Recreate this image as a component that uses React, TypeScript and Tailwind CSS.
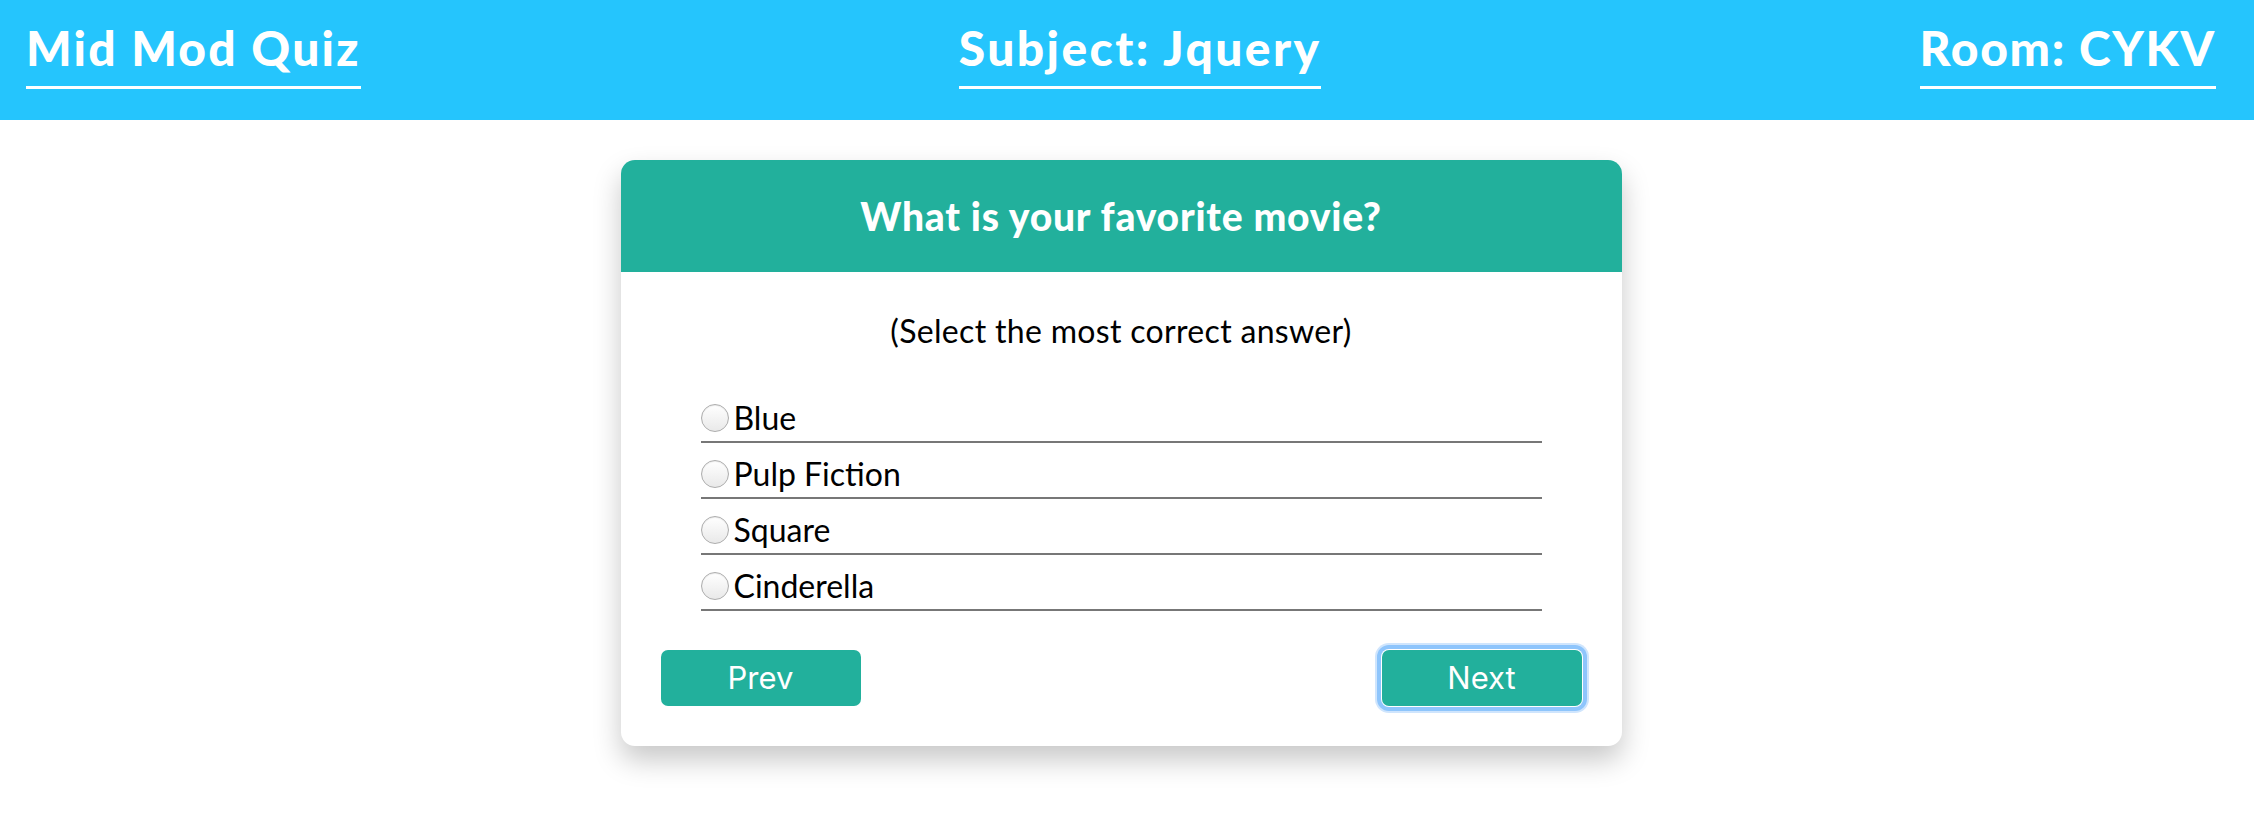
import React from 'react';

const answers = ['Blue', 'Pulp Fiction', 'Square', 'Cinderella'];

function Radio() {
  return (
    <span className="mr-[5px] inline-block h-[28px] w-[28px] shrink-0 rounded-full border border-[#adadad] bg-gradient-to-b from-[#ffffff] to-[#e9e9e9] shadow-[inset_0_1px_1px_rgba(0,0,0,0.08)]" />
  );
}

export default function App() {
  return (
    <div className="min-h-screen bg-white font-['Lato','Noto_Sans',sans-serif]">
      {/* Header */}
      <header className="flex h-[120px] items-start justify-between bg-[#25c5fd] pl-[26px] pr-[38px] text-white">
        <h1 className="mt-[19px] border-b-[3px] border-white pb-[9px] text-[48px] leading-[58px] font-black tracking-[0.045em]">
          Mid Mod Quiz
        </h1>
        <h2 className="mt-[19px] border-b-[3px] border-white pb-[9px] text-[48px] leading-[58px] font-black tracking-[0.05em]">
          Subject: Jquery
        </h2>
        <h2 className="mt-[19px] border-b-[3px] border-white pb-[9px] text-[48px] leading-[58px] font-black tracking-[0.035em]">
          Room: CYKV
        </h2>
      </header>

      {/* Quiz card */}
      <main className="flex justify-center pr-[12px] pt-[40px]">
        <div className="w-[1001px] overflow-hidden rounded-[14px] bg-white shadow-[0_14px_28px_rgba(0,0,0,0.22)]">
          <div className="flex h-[112px] items-center justify-center bg-[#22b09c]">
            <h3 className="text-[39px] leading-none font-black tracking-[0.02em] text-white">What is your favorite movie?</h3>
          </div>

          <div className="px-[40px] pt-[42px] pb-[40px]">
            <p className="text-center text-[32px] leading-[34px] tracking-[0.01em] text-black">(Select the most correct answer)</p>

            <ul className="mx-auto mt-[39px] w-[841px]">
              {answers.map((a) => (
                <li key={a} className="flex h-[56px] items-center border-b-2 border-[#777] pt-[8px]">
                  <label className="flex items-center">
                    <Radio />
                    <span className="text-[32px] leading-none text-black">{a}</span>
                  </label>
                </li>
              ))}
            </ul>

            <div className="mt-[39px] flex justify-between">
              <button className="h-[56px] w-[200px] rounded-[7px] bg-[#22b09c] font-['Inter',sans-serif] text-[31px] text-white">
                Prev
              </button>
              <button className="h-[56px] w-[200px] rounded-[7px] bg-[#22b09c] font-['Inter',sans-serif] text-[31px] text-white shadow-[0_0_0_1px_#ffffff,0_0_0_5px_#8ec5fc,0_0_0_7px_#cfe5fd]">
                Next
              </button>
            </div>
          </div>
        </div>
      </main>
    </div>
  );
}
